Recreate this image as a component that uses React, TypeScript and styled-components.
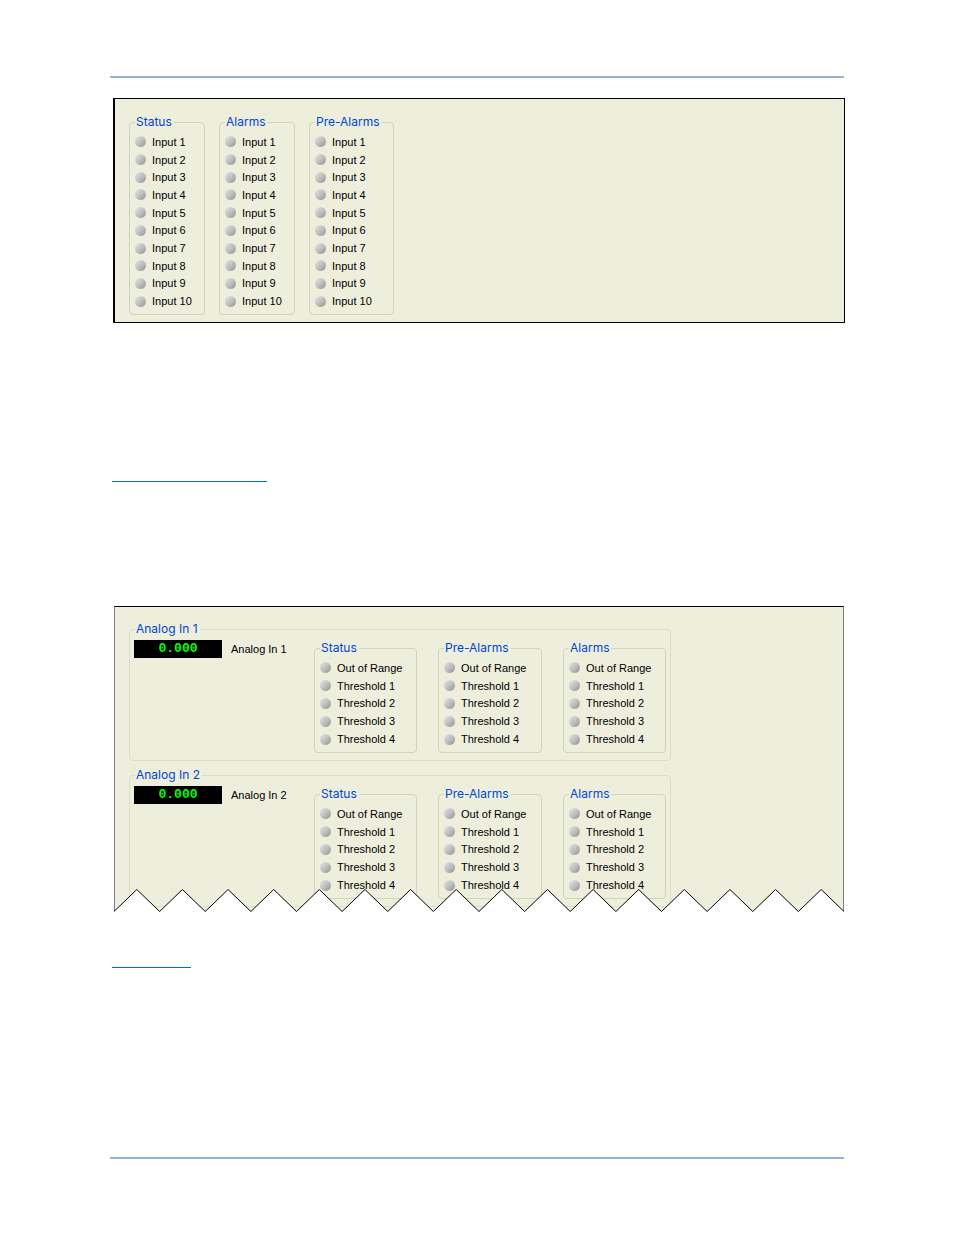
import React from "react";
import styled, { createGlobalStyle } from "styled-components";

const GlobalStyle = createGlobalStyle`
  *, *::before, *::after { box-sizing: border-box; }
  body {
    margin: 0;
    background: #ffffff;
    color: #000000;
    font-family: "Liberation Sans", Arial, sans-serif;
    font-size: 11px;
    line-height: 16px;
  }
`;

const Page = styled.main`
  display: flex;
  flex-direction: column;
  padding: 76px 110px;
`;

const PageRule = styled.hr`
  width: 100%;
  height: 2px;
  margin: 0;
  border: 0;
  background: #95b3d7;
`;

const HeadingRule = styled.hr<{ $width: number; $top: number; $bottom: number }>`
  width: ${(p) => p.$width}px;
  height: 1px;
  margin: ${(p) => p.$top}px 0 ${(p) => p.$bottom}px 2px;
  border: 0;
  background: #0070c0;
`;

const Panel = styled.section`
  display: flex;
  align-items: flex-start;
  gap: 14px;
  margin: 20px -1px 0 3px;
  padding: 15px 14px 7px;
  border: 1px solid #000000;
  border-left-width: 2px;
  background: #eeeedd;
`;

const TornPanel = styled.section`
  position: relative;
  display: flex;
  flex-direction: column;
  align-items: flex-start;
  gap: 6px;
  margin: 0 0 0 4px;
  padding: 14px 14px 5px;
  border: solid #808080;
  border-width: 1px 1px 0;
  border-top-color: #000000;
  background: #eeeedd;
`;

const TornEdge = styled.svg`
  position: absolute;
  left: -1px;
  bottom: 0;
  width: calc(100% + 2px);
  height: 23px;
`;

const Group = styled.fieldset<{ $width: number }>`
  width: ${(p) => p.$width}px;
  min-width: 0;
  margin: 0;
  padding: 3px 5px 4px;
  border: 1px solid #d2d4ba;
  border-radius: 4px;
`;

const Legend = styled.legend`
  margin-left: 0;
  padding: 0 2px 0 1px;
  color: #0046d5;
  font-family: Inter, "Liberation Sans", sans-serif;
  font-size: 12px;
  line-height: 16px;
`;

const ChannelGroup = styled(Group)`
  padding: 3px 4px 7px;
  border-color: #dcdec8;

  > ${Legend} {
    margin-left: 1px;
  }
`;

const ChannelBody = styled.div`
  display: flex;
  align-items: flex-start;
`;

const Readout = styled.output`
  width: 88px;
  height: 18px;
  background: #000000;
  color: #00ff00;
  font-family: "Liberation Mono", monospace;
  font-size: 13px;
  font-weight: 700;
  line-height: 17px;
  text-align: center;
`;

const ReadoutLabel = styled.label`
  width: 92px;
  padding-left: 9px;
  line-height: 18px;
`;

const GroupRow = styled.div`
  display: flex;
  gap: 21px;
`;

const List = styled.ul<{ $height: number }>`
  display: grid;
  grid-auto-rows: 1fr;
  min-height: ${(p) => p.$height}px;
  margin: 0;
  padding: 0;
  list-style: none;
`;

const Item = styled.li`
  display: flex;
  align-items: center;
  gap: 6px;
  white-space: nowrap;
`;

const Led = styled.span`
  flex: none;
  width: 11px;
  height: 11px;
  border-radius: 50%;
  background: linear-gradient(135deg, #dedede 10%, #bcbcbc 55%, #969696 95%);
`;

const inputs = Array.from({ length: 10 }, (_, i) => `Input ${i + 1}`);
const thresholds = ["Out of Range", "Threshold 1", "Threshold 2", "Threshold 3", "Threshold 4"];

function LedGroup({ title, items, width, height }: { title: string; items: string[]; width: number; height: number }) {
  return (
    <Group $width={width}>
      <Legend>{title}</Legend>
      <List $height={height}>
        {items.map((item) => (
          <Item key={item}>
            <Led />
            {item}
          </Item>
        ))}
      </List>
    </Group>
  );
}

function Channel({ n }: { n: number }) {
  const id = `analog-in-${n}`;
  return (
    <ChannelGroup $width={542}>
      <Legend>Analog In {n}</Legend>
      <ChannelBody>
        <Readout id={id}>0.000</Readout>
        <ReadoutLabel htmlFor={id}>Analog In {n}</ReadoutLabel>
        <GroupRow>
          <LedGroup title="Status" items={thresholds} width={103} height={89} />
          <LedGroup title="Pre-Alarms" items={thresholds} width={104} height={89} />
          <LedGroup title="Alarms" items={thresholds} width={103} height={89} />
        </GroupRow>
      </ChannelBody>
    </ChannelGroup>
  );
}

const TEETH = 16;
const edge = Array.from({ length: TEETH * 2 + 1 }, (_, i) => `${i * 10},${i % 2 ? 0.5 : 22.5}`).join(" ");

export default function App() {
  return (
    <>
      <GlobalStyle />
      <Page>
        <PageRule />
        <Panel>
          <LedGroup title="Status" items={inputs} width={76} height={177} />
          <LedGroup title="Alarms" items={inputs} width={76} height={177} />
          <LedGroup title="Pre-Alarms" items={inputs} width={85} height={177} />
        </Panel>
        <HeadingRule $width={155} $top={158} $bottom={124} />
        <TornPanel>
          <Channel n={1} />
          <Channel n={2} />
          <TornEdge viewBox={`0 0 ${TEETH * 20} 23`} preserveAspectRatio="none" aria-hidden="true">
            <polygon points={`${edge} ${TEETH * 20},23 0,23`} fill="#ffffff" />
            <polyline points={edge} fill="none" stroke="#000000" strokeWidth="1" vectorEffect="non-scaling-stroke" />
          </TornEdge>
        </TornPanel>
        <HeadingRule $width={79} $top={55} $bottom={189} />
        <PageRule />
      </Page>
    </>
  );
}
